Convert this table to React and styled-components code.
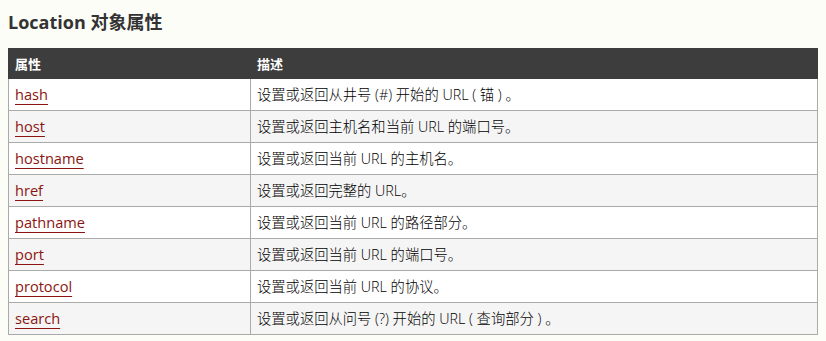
import React from "react";
import styled, { createGlobalStyle } from "styled-components";

const GlobalStyle = createGlobalStyle`
  body {
    margin: 0;
    padding: 0 8px;
    background-color: #fdfdf8;
    font-family: "Open Sans", "Noto Sans CJK SC", sans-serif;
  }
`;

const Title = styled.h2`
  margin: 0;
  padding: 9px 0 0;
  height: 48px;
  box-sizing: border-box;
  font-size: 18px;
  font-weight: 700;
  color: #333;
  line-height: 26px;
`;

const Table = styled.table`
  width: 810px;
  border-collapse: collapse;
  color: #000;
`;

const HeadCell = styled.th`
  background-color: #3d3d3d;
  color: #fff;
  text-align: left;
  font-size: 13px;
  font-weight: 700;
  height: 30px;
  padding: 0 6px;
  border: 1px solid #3d3d3d;
  width: ${props => props.width || "auto"};
  box-sizing: border-box;
`;

const Row = styled.tr`
  background-color: ${props => (props.odd ? "#f5f5f5" : "#fff")};
`;

const Cell = styled.td`
  height: 32px;
  padding: 0 6px;
  border: 1px solid #aaa;
  box-sizing: border-box;
  vertical-align: middle;
  font-size: 14.3px;
  font-weight: 300;
  line-height: 20px;
`;

const PropLink = styled.a`
  color: #8b1410;
  font-size: 14.6px;
  font-weight: 400;
  text-decoration: underline;
  text-underline-offset: 4px;
  text-decoration-thickness: 1px;
`;

const rows = [
  ["hash", "设置或返回从井号 (#) 开始的 URL ( 锚 ) 。"],
  ["host", "设置或返回主机名和当前 URL 的端口号。"],
  ["hostname", "设置或返回当前 URL 的主机名。"],
  ["href", "设置或返回完整的 URL。"],
  ["pathname", "设置或返回当前 URL 的路径部分。"],
  ["port", "设置或返回当前 URL 的端口号。"],
  ["protocol", "设置或返回当前 URL 的协议。"],
  ["search", "设置或返回从问号 (?) 开始的 URL ( 查询部分 ) 。"],
];

export default function App() {
  return (
    <>
      <GlobalStyle />
      <Title>Location 对象属性</Title>
      <Table>
        <thead>
          <tr>
            <HeadCell width="242px">属性</HeadCell>
            <HeadCell>描述</HeadCell>
          </tr>
        </thead>
        <tbody>
          {rows.map(([name, desc], i) => (
            <Row key={name} odd={i % 2 === 1}>
              <Cell>
                <PropLink href="#">{name}</PropLink>
              </Cell>
              <Cell>{desc}</Cell>
            </Row>
          ))}
        </tbody>
      </Table>
    </>
  );
}
